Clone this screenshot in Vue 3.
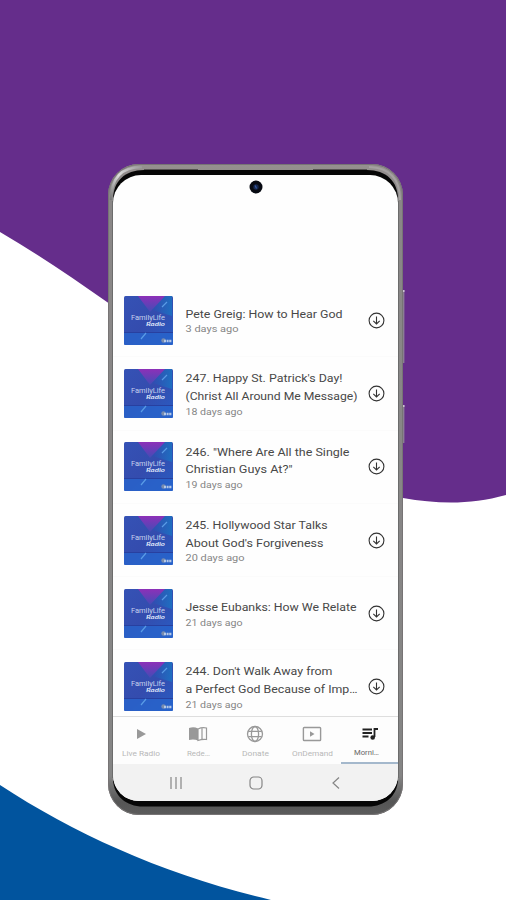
<script setup>
const episodes = [
  { lines: [['Pete Greig: How to Hear God', 157]], age: '3 days ago', ageWidth: 53 },
  { lines: [["247. Happy St. Patrick's Day!", 157], ['(Christ All Around Me Message)', 172]], age: '18 days ago', ageWidth: 57 },
  { lines: [['246. "Where Are All the Single', 164], ['Christian Guys At?"', 107]], age: '19 days ago', ageWidth: 57 },
  { lines: [['245. Hollywood Star Talks', 142], ["About God's Forgiveness", 138]], age: '20 days ago', ageWidth: 59 },
  { lines: [['Jesse Eubanks: How We Relate', 171]], age: '21 days ago', ageWidth: 57 },
  { lines: [["244. Don't Walk Away from", 147], ['a Perfect God Because of Imp…', 172]], age: '21 days ago', ageWidth: 57 },
]
const tabs = [
  { id: 'live', label: 'Live Radio', width: 38 },
  { id: 'read', label: 'Rede…', width: 23 },
  { id: 'donate', label: 'Donate', width: 27 },
  { id: 'demand', label: 'OnDemand', width: 41 },
  { id: 'more', label: 'Morni…', width: 25 },
]
</script>

<template>
  <main class="stage">
    <svg class="backdrop" viewBox="0 0 506 900" aria-hidden="true">
      <path fill="#652d8b" d="M0 0H506V495C470 505 438 504 403 498C310 478 220 382 107 302C73 278 36 253 0 232Z" />
      <path fill="#01549e" d="M0 785C76 835 168 876 271 900H0Z" />
    </svg>
    <div class="phone">
      <svg class="frame" viewBox="0 0 299 653" aria-hidden="true">
        <defs>
          <linearGradient id="metal" x1="0" y1="0" x2="0" y2="1">
            <stop offset="0" stop-color="#96918f" />
            <stop offset=".04" stop-color="#8a8787" />
            <stop offset=".94" stop-color="#858585" />
            <stop offset=".98" stop-color="#555" />
            <stop offset="1" stop-color="#5c5c5c" />
          </linearGradient>
          <linearGradient id="glint" x1="0" y1="1" x2="1" y2="0">
            <stop offset="0" stop-color="#777" />
            <stop offset=".5" stop-color="#ddd" />
            <stop offset="1" stop-color="#999" />
          </linearGradient>
        </defs>
        <path d="M294 126h2.400v73H294zM294 241h2.400v38H294z" fill="#8b7d94" />
        <path d="M294.500 126h2v2h-2zM294.500 241h2v2h-2z" fill="#ccc0d3" />
        <rect width="295" height="651" rx="31" fill="url(#metal)" />
        <rect x=".5" y=".5" width="294" height="650" rx="30.500" fill="none" stroke="#777475" />
        <path d="M3 36Q3 3 34 3" fill="none" stroke="url(#glint)" stroke-width="2.500" />
        <path d="M261 3Q292 4 292 36" fill="none" stroke="#a5a1a1" stroke-width="2" />
        <path d="M5 36C5 17 17 6 36 6H259C278 6 290 17 290 36V616C289 632 277 642.500 260 642.500H35C18 642.500 6 632 5 616Z" fill="#060606" />
        <path d="M4.500 37V614M290.500 37V614" fill="none" stroke="#6c6c6c" />
        <path d="M36 5.500H90M205 5.500H259" stroke="#555151" />
      </svg>
      <div class="screen">
        <header class="top">
          <svg class="camera" viewBox="0 0 14 14"><circle cx="7" cy="7" r="6.500" fill="#070a12" /><circle cx="7" cy="7" r="2.700" fill="#17284f" /><path d="M6.200 5.500l1.300 3" stroke="#345aa5" stroke-width="1.200" /></svg>
        </header>
        <section class="list">
          <article v-for="(e, i) in episodes" :key="i" class="row">
            <svg class="cover" viewBox="0 0 49 49">
              <defs>
                <linearGradient id="art" x1="0" y1="0" x2="1" y2="1"><stop offset="0" stop-color="#3552b5" /><stop offset=".5" stop-color="#344cae" /><stop offset="1" stop-color="#285dc4" /></linearGradient>
                <linearGradient id="beam" x1="0" y1="0" x2="0" y2="1"><stop offset="0" stop-color="#8d30b8" /><stop offset="1" stop-color="#414db6" /></linearGradient>
                <linearGradient id="sky" x1="0" y1="0" x2="1" y2="0"><stop offset="0" stop-color="#3445ae" /><stop offset="1" stop-color="#1978c5" /></linearGradient>
              </defs>
              <rect width="49" height="49" rx="1.500" fill="url(#art)" />
              <path d="M34 0H48V20L25 13Z" fill="url(#sky)" opacity=".75" />
              <path d="M14 0H41L26 16Z" fill="url(#beam)" />
              <path d="M0 37H49V47.500Q49 49 47.500 49H1.500Q0 49 0 47.500Z" fill="#2864cc" opacity=".8" />
              <path d="M0 36.500H49" stroke="#2840a0" />
              <path d="M17 43L22 37M38 11L43 6" stroke="#599be6" stroke-width="1.200" />
              <text x="7" y="23.500" class="brand" textLength="34" lengthAdjust="spacingAndGlyphs">FamilyLife</text>
              <text x="22" y="30" class="script" textLength="19" lengthAdjust="spacingAndGlyphs">Radio</text>
              <circle cx="39.500" cy="44.500" r="2.200" fill="#788caf" />
              <path d="M40 45H48" stroke="#b5c9e7" stroke-width="2.400" stroke-dasharray="2 .6" />
            </svg>
            <div class="copy">
              <svg v-for="line in e.lines" :key="line[0]" class="title"><text x="-.5" y="12.800" :textLength="line[1]" lengthAdjust="spacingAndGlyphs">{{ line[0] }}</text></svg>
              <svg class="age"><text x="-.5" y="10.300" :textLength="e.ageWidth" lengthAdjust="spacingAndGlyphs">{{ e.age }}</text></svg>
            </div>
            <svg class="download" viewBox="0 0 17 17"><circle cx="8.500" cy="8.500" r="7.400" /><path d="M8.500 4.500V12M5.300 8.900L8.500 12L11.700 8.900" /></svg>
          </article>
        </section>
        <nav class="tabs">
          <div v-for="t in tabs" :key="t.id" class="tab" :class="{ active: t.id === 'more' }">
            <svg class="glyph" viewBox="0 0 20 18">
              <path v-if="t.id === 'live'" d="M6 4L15 9L6 14Z" fill="currentColor" />
              <g v-else-if="t.id === 'read'"><path d="M1 3Q6 1.500 10 3.500V15.500Q6 14 1 15Z" fill="currentColor" /><path d="M10 4Q14 2 18.500 3V14.500Q14 14 10 15.500ZM14 3V14" fill="none" stroke="currentColor" stroke-width="1.200" /></g>
              <g v-else-if="t.id === 'donate'" fill="none" stroke="currentColor" stroke-width="1.300"><circle cx="10" cy="9" r="7.500" /><ellipse cx="10" cy="9" rx="3.600" ry="7.500" /><path d="M3.300 6.400H16.700M3.300 11.600H16.700" /></g>
              <g v-else-if="t.id === 'demand'"><rect x="1.400" y="2.500" width="17.200" height="13" rx=".8" fill="none" stroke="currentColor" stroke-width="1.400" /><path d="M8 6.300L12.500 9L8 11.700Z" fill="currentColor" /></g>
              <g v-else><path d="M2.500 4.500H12M2.500 8H12M2.500 11.500H8.500" stroke="currentColor" stroke-width="1.900" /><path d="M14.500 12V4H18" fill="none" stroke="currentColor" stroke-width="1.800" /><circle cx="12.700" cy="12.500" r="2.300" fill="currentColor" /></g>
            </svg>
            <svg class="label" :style="{ width: t.width + 'px' }"><text x="0" y="8" :textLength="t.width" lengthAdjust="spacingAndGlyphs">{{ t.label }}</text></svg>
          </div>
        </nav>
        <footer class="system">
          <svg viewBox="0 0 14 14"><path d="M2 1V13M7 1V13M12 1V13" /></svg>
          <svg viewBox="0 0 14 14"><rect x="1" y="1" width="12" height="12" rx="3.700" /></svg>
          <svg viewBox="0 0 14 14"><path d="M10 1.500L4 7L10 12.500" /></svg>
        </footer>
      </div>
    </div>
  </main>
</template>

<style>
body { margin: 0; background: #fff; }
</style>

<style scoped>
.stage { position: relative; box-sizing: border-box; width: 506px; height: 900px; padding: 164px 0 0 108px; overflow: hidden; font-family: Roboto, "Liberation Sans", sans-serif; }
.backdrop { position: absolute; inset: 0; width: 506px; height: 900px; }
.phone { position: relative; box-sizing: border-box; width: 295px; height: 651px; padding: 11px 5px 14px; }
.frame { position: absolute; top: 0; left: 0; width: 299px; height: 653px; }
.screen { position: relative; display: flex; flex-direction: column; width: 285px; height: 626px; overflow: hidden; border-radius: 28px 28px 26px 26px; background: #fefefe; }
.top { display: flex; justify-content: center; height: 109px; flex: none; box-sizing: border-box; padding-top: 5px; }
.camera { width: 14px; height: 14px; }
.list { height: 432px; overflow: hidden; flex: none; }
.row { box-sizing: border-box; display: flex; align-items: center; height: 73.3px; padding: 0 13px 0 11px; border-bottom: 1px solid #fbfbfb; }
.cover { flex: none; width: 49px; height: 49px; margin-right: 13px; }
.brand { font: 400 7px Roboto, sans-serif; fill: #c7d0ee; }
.script { font: italic bold 6px Lato, sans-serif; fill: #dbe2f7; }
.copy { display: flex; flex-direction: column; width: 174px; flex: none; padding-top: 1px; }
.title { display: block; width: 174px; height: 17.7px; overflow: visible; }
.title text { font-size: 11.7px; fill: #484848; }
.age { display: block; width: 100px; height: 14px; overflow: visible; }
.age text { font-size: 9.5px; fill: #858585; }
.download { flex: none; width: 17px; height: 17px; margin-left: auto; fill: none; stroke: #333; stroke-width: 1.1; }
.tabs { box-sizing: border-box; display: grid; grid-template-columns: repeat(5, 57px); height: 48px; flex: none; border-top: 1px solid #dedede; background: #fdfdfd; }
.tab { box-sizing: border-box; display: flex; flex-direction: column; align-items: center; padding: 8px 1px 0 0; color: #999; }
.tab.active { padding: 8px 0 0; color: #222; border-bottom: 2px solid #a4b8cc; }
.glyph { width: 20px; height: 18px; }
.label { display: block; height: 11px; margin-top: 5px; overflow: visible; }
.label text { font-size: 7.6px; fill: #b8b8b8; }
.active .label { margin: 4px 7px 0 0; }
.active .label text { fill: #666; }
.system { display: flex; align-items: center; justify-content: space-between; height: 37px; padding: 0 55px 0 56px; background: #f2f2f2; }
.system svg { width: 14px; height: 14px; fill: none; stroke: #858585; stroke-width: 1.2; }
</style>
